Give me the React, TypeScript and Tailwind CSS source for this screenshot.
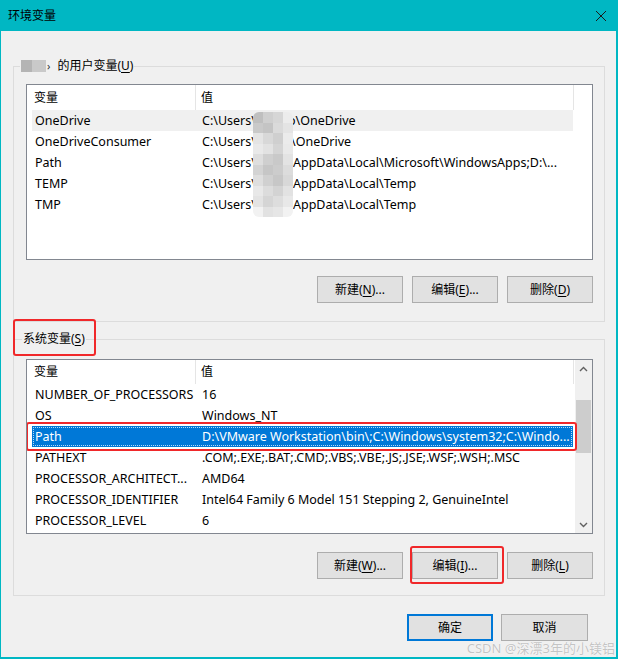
import React from "react";

type Row = { name: string; value: React.ReactNode; hl?: "gray" | "blue" };

function Btn({ label, u, tail, primary, w = "w-[86px]" }: { label: string; u: string; tail?: string; primary?: boolean; w?: string }) {
  return (
    <div
      className={`${w} h-[27px] flex items-center justify-center bg-[#e1e1e1] text-[12px] text-black ${
        primary ? "border-2 border-[#0078d7]" : "border border-[#adadad]"
      }`}
    >
      <span>
        {label}
        {u ? (
          <>
            (<span className="underline underline-offset-2">{u}</span>){tail ?? ""}
          </>
        ) : null}
      </span>
    </div>
  );
}

function Chevron({ down }: { down?: boolean }) {
  return (
    <svg width="9" height="6" viewBox="0 0 9 6" className={down ? "rotate-180" : ""}>
      <path d="M1 5 L4.5 1.5 L8 5" fill="none" stroke="#606060" strokeWidth="1.4" />
    </svg>
  );
}

const mosaic = [
  ["#bfbfbf", "#cfcfcf", "#d6d6d6", "#ececec"],
  ["#c9c9c9", "#c4c4c4", "#dadada", "#e4e4e4"],
  ["#e4e4e4", "#d8d8d8", "#cfcfcf", "#ebebeb"],
  ["#e9e9e9", "#e2e2e2", "#d4d4d4", "#e9e9e9"],
  ["#dedede", "#cfcfcf", "#c9c9c9", "#e3e3e3"],
  ["#d3d3d3", "#c6c6c6", "#cccccc", "#dcdcdc"],
  ["#dedede", "#d0d0d0", "#c7c7c7", "#d8d8d8"],
  ["#e8e8e8", "#dcdcdc", "#d3d3d3", "#e2e2e2"],
  ["#e3e3e3", "#d5d5d5", "#dddddd", "#e8e8e8"],
  ["#f2f2f2", "#e2e2e2", "#e6e6e6", "#f2f2f2"],
];

function ListBox({
  rows,
  headerH,
  height,
  scrollbar,
  overlay,
}: {
  rows: Row[];
  headerH: string;
  height: string;
  scrollbar?: boolean;
  overlay?: React.ReactNode;
}) {
  return (
    <div className={`relative w-[567px] ${height} border border-[#828790] bg-white flex overflow-hidden`}>
      <div className="w-[548px] flex flex-col">
        <div className={`${headerH} w-[547px] flex items-center text-[12px] text-black border-r border-[#e5e5e5]`}>
          <div className="w-[169px] h-full pl-[7px] flex items-center border-r border-[#e5e5e5]">变量</div>
          <div className="pl-[5px]">值</div>
        </div>
        {rows.map((r, i) => (
          <div
            key={i}
            className={`relative ml-[5px] w-[541px] h-[21px] pt-[1px] flex items-center text-[12.5px] whitespace-nowrap ${
              r.hl === "blue" ? "bg-[#0078d7] text-white" : r.hl === "gray" ? "bg-[#f0f0f0] text-black" : "text-black"
            }`}
          >
            {r.hl === "blue" && (
              <div className="absolute inset-[1px] border border-dotted border-[#b8d9f5]" />
            )}
            {r.hl === "blue" && (
              <div className="absolute left-[-6px] right-[-4px] top-[-4px] bottom-[-4px] border-[2.5px] border-[#f0282a] rounded-[3px]" />
            )}
            <div className="w-[164px] pl-[3px] overflow-hidden">{r.name}</div>
            <div className="flex-1 pl-[6px] overflow-hidden">{r.value}</div>
          </div>
        ))}
      </div>
      {scrollbar && (
        <div className="w-[17px] h-full bg-[#f0f0f0] flex flex-col">
          <div className="h-[17px] flex items-center justify-center">
            <Chevron />
          </div>
          <div className="h-[23px]" />
          <div className="h-[53px] mx-[1px] bg-[#cdcdcd]" />
          <div className="flex-1" />
          <div className="h-[17px] flex items-center justify-center">
            <Chevron down />
          </div>
        </div>
      )}
      {overlay}
    </div>
  );
}

export default function App() {
  const userRows: Row[] = [
    {
      name: "OneDrive",
      hl: "gray",
      value: (
        <span className="flex">
          <span className="w-[51px]">C:\Users\</span>
          <span className="pl-[35px]">o\OneDrive</span>
        </span>
      ),
    },
    {
      name: "OneDriveConsumer",
      value: (
        <span className="flex">
          <span className="w-[51px]">C:\Users\</span>
          <span className="pl-[38px]">\OneDrive</span>
        </span>
      ),
    },
    {
      name: "Path",
      value: (
        <span className="flex">
          <span className="w-[51px]">C:\Users\</span>
          <span className="pl-[40px]">AppData\Local\Microsoft\WindowsApps;D:\...</span>
        </span>
      ),
    },
    {
      name: "TEMP",
      value: (
        <span className="flex">
          <span className="w-[51px]">C:\Users\F</span>
          <span className="pl-[40px]">AppData\Local\Temp</span>
        </span>
      ),
    },
    {
      name: "TMP",
      value: (
        <span className="flex">
          <span className="w-[51px]">C:\Users\F</span>
          <span className="pl-[40px]">AppData\Local\Temp</span>
        </span>
      ),
    },
  ];

  const sysRows: Row[] = [
    { name: "NUMBER_OF_PROCESSORS", value: "16" },
    { name: "OS", value: "Windows_NT" },
    { name: "Path", value: "D:\\VMware Workstation\\bin\\;C:\\Windows\\system32;C:\\Windo...", hl: "blue" },
    { name: "PATHEXT", value: ".COM;.EXE;.BAT;.CMD;.VBS;.VBE;.JS;.JSE;.WSF;.WSH;.MSC" },
    { name: "PROCESSOR_ARCHITECT...", value: "AMD64" },
    { name: "PROCESSOR_IDENTIFIER", value: "Intel64 Family 6 Model 151 Stepping 2, GenuineIntel" },
    { name: "PROCESSOR_LEVEL", value: "6" },
  ];

  const mosaicOverlay = (
    <div className="absolute left-[226px] top-[27px] w-[40px] h-[105px] grid grid-cols-4 grid-rows-[repeat(10,10.5px)] rounded-[6px] overflow-hidden">
      {mosaic.flat().map((c, i) => (
        <div key={i} style={{ backgroundColor: c }} />
      ))}
    </div>
  );

  return (
    <div className="relative w-[618px] h-[659px] flex flex-col bg-[#f0f0f0] font-['Noto_Sans','Noto_Sans_CJK_SC',sans-serif] text-black overflow-hidden">
      {/* Title bar */}
      <div className="h-[31px] shrink-0 bg-[#00b7c3] flex items-center justify-between pl-[8px] pr-[11px]">
        <span className="text-[12px] leading-none">环境变量</span>
        <svg width="12" height="12" viewBox="0 0 12 12">
          <path d="M1 1 L11 11 M11 1 L1 11" stroke="#1a1a1a" strokeWidth="1" fill="none" />
        </svg>
      </div>

      {/* Body */}
      <div className="flex-1 flex flex-col border-l border-r-2 border-b-2 border-[#00b7c3] pl-[12px]">
        {/* User variables group */}
        <div className="relative mt-[35px] w-[592px] border border-[#dcdcdc] pt-[17px] pl-[12px] pr-[11px] pb-[18px] flex flex-col">
          <div className="absolute -top-[9px] left-[6px] px-[1px] bg-[#f0f0f0] flex items-center h-[16px] text-[12px] leading-[16px]">
            <span className="w-[11px] h-[12px] bg-[#b4b4b4]" />
            <span className="w-[14px] h-[12px] bg-[#c9c9c9]" />
            <span className="ml-[1px] text-[11px] text-[#333]">›</span>
            <span className="ml-[7px]">
              的用户变量(<span className="underline underline-offset-2">U</span>)
            </span>
          </div>
          <ListBox rows={userRows} headerH="h-[25px]" height="h-[176px]" overlay={mosaicOverlay} />
          <div className="mt-[16px] flex justify-end gap-[9px]">
            <Btn label="新建" u="N" tail="..." />
            <Btn label="编辑" u="E" tail="..." />
            <Btn label="删除" u="D" />
          </div>
        </div>

        {/* System variables group */}
        <div className="relative mt-[17px] w-[592px] border border-[#dcdcdc] pt-[19px] pl-[12px] pr-[11px] pb-[16px] flex flex-col">
          <div className="absolute -top-[9px] left-[8px] px-[1px] bg-[#f0f0f0] h-[16px] text-[12px] leading-[16px]">
            系统变量(<span className="underline underline-offset-2">S</span>)
          </div>
          <div className="absolute -top-[21px] -left-[1px] w-[83px] h-[37px] border-[2.5px] border-[#f0282a] rounded-[3px]" />
          <ListBox rows={sysRows} headerH="h-[24px]" height="h-[175px]" scrollbar />
          <div className="mt-[18px] flex justify-end gap-[9px]">
            <Btn label="新建" u="W" tail="..." />
            <div className="relative">
              <Btn label="编辑" u="I" tail="..." />
              <div className="absolute -left-[2px] -top-[6px] w-[94px] h-[38px] border-[2.5px] border-[#f0282a] rounded-[3px]" />
            </div>
            <Btn label="删除" u="L" />
          </div>
        </div>

        {/* Footer */}
        <div className="mt-[18px] w-[592px] pr-[17px] flex justify-end gap-[8px]">
          <Btn label="确定" u="" primary />
          <Btn label="取消" u="" w="w-[87px]" />
        </div>
      </div>

      {/* Watermark */}
      <div className="absolute right-[3px] bottom-[3px] text-[13px] leading-[16px] text-[#c4c4c4] [text-shadow:0_0_1px_#ffffff,0_0_1px_#ffffff]">
        CSDN @深漂3年的小镁铝
      </div>
    </div>
  );
}
